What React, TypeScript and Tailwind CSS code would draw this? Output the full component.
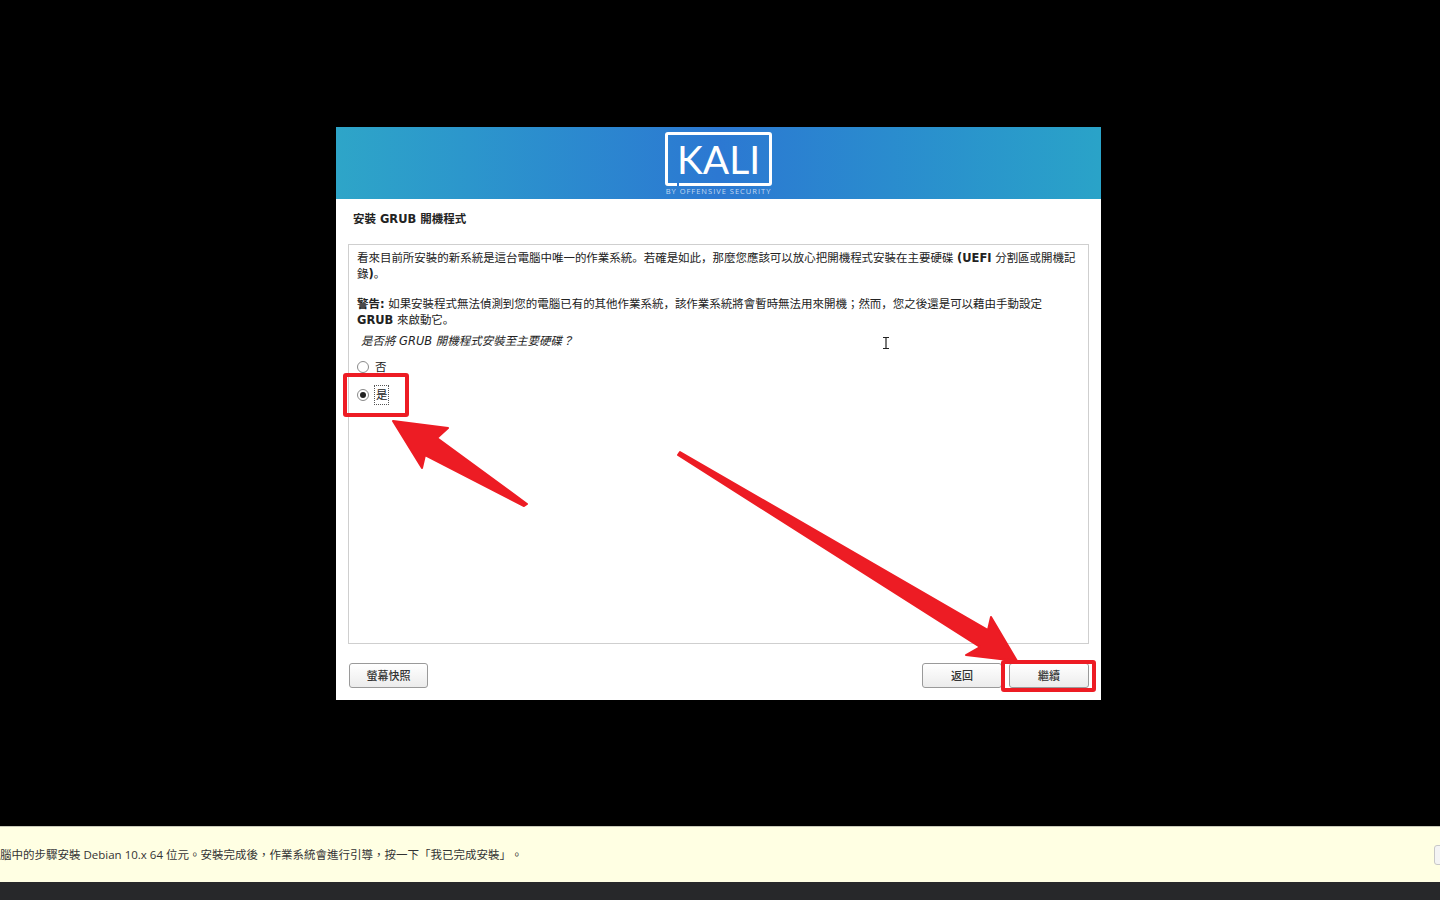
const font = "font-['DejaVu_Sans','Noto_Sans_CJK_JP',sans-serif]";

const Radio = ({ checked, label }: { checked?: boolean; label: string }) => (
  <div className="flex h-[16px] items-center gap-[5px]">
    <span className="flex h-[12px] w-[12px] items-center justify-center rounded-full border border-[#8a8a8a] bg-white">
      {checked && <span className="h-[6px] w-[6px] rounded-full bg-[#222]" />}
    </span>
    <span
      className={
        checked
          ? "border border-dotted border-[#555] px-px leading-[18px]"
          : "px-px"
      }
    >
      {label}
    </span>
  </div>
);

const Button = ({ label, className }: { label: string; className: string }) => (
  <button
    className={`h-[25px] rounded-[3px] border border-[#9a9a9a] bg-gradient-to-b from-white to-[#ececec] pt-[2px] text-[11px] font-medium text-[#333] ${className}`}
  >
    {label}
  </button>
);

const App = (): JSX.Element => {
  return (
    <div className={`relative flex h-screen flex-col overflow-hidden bg-black ${font}`}>
      <div className="ml-[336px] mt-[127px] flex h-[573px] w-[765px] flex-col bg-white text-[11.48px] leading-[16px] text-[#222]">
        <div className="flex h-[72px] flex-col items-center bg-gradient-to-r from-[#2ea5c8] via-[#2c78d2] to-[#2aa3c8] pt-[5px]">
          <div className="relative flex h-[54px] w-[107px] items-center justify-center rounded-[3px] border-[3px] border-white font-['Lato',sans-serif] text-[39px] leading-none text-white">
            KALI
            <span className="absolute -bottom-[3px] left-[9px] h-[3px] w-[2px] bg-[#2c78d2]" />
          </div>
          <div className="mt-[1px] whitespace-nowrap font-['Open_Sans',sans-serif] text-[7.5px] leading-[9px] tracking-[1px] text-[#c3d9f1]">
            BY OFFENSIVE SECURITY
          </div>
        </div>

        <h1 className="ml-[17px] mt-[12px] font-bold">安裝 GRUB 開機程式</h1>

        <div className="ml-[12px] mt-[17px] h-[400px] w-[741px] border border-[#cfcfcf] pl-[8px] pt-[5px]">
          <p className="whitespace-nowrap">
            看來目前所安裝的新系統是這台電腦中唯一的作業系統。若確是如此，那麼您應該可以放心把開機程式安裝在主要硬碟{" "}
            <b>(UEFI</b> 分割區或開機記
            <br />
            錄<b>)</b>。
          </p>
          <p className="mt-[14px] whitespace-nowrap">
            <b>警告:</b> 如果安裝程式無法偵測到您的電腦已有的其他作業系統，該作業系統將會暫時無法用來開機；然而，您之後還是可以藉由手動設定
            <br />
            <b>GRUB</b> 來啟動它。
          </p>
          <p className="ml-[4px] mt-[5px] italic">是否將 GRUB 開機程式安裝至主要硬碟？</p>
          <div className="mt-[10px] flex flex-col gap-[12px]">
            <Radio label="否" />
            <Radio checked label="是" />
          </div>
        </div>

        <div className="ml-[12px] mt-[19px] flex w-[741px] items-center">
          <Button label="螢幕快照" className="ml-px w-[79px]" />
          <Button label="返回" className="ml-auto w-[80px]" />
          <Button label="繼續" className="ml-[7px] w-[80px]" />
        </div>
      </div>

      <div className="mt-[126px] flex h-[56px] items-center justify-between overflow-hidden border-t border-[#c9c9b8] bg-[#ffffe3] font-['Open_Sans','Noto_Sans_CJK_TC',sans-serif]">
        <p className="whitespace-nowrap pt-[1px] text-[11.5px] text-[#333] [text-spacing-trim:space-all]">
          腦中的步驟安裝 Debian 10.x 64 位元。安裝完成後，作業系統會進行引導，按一下「我已完成安裝」。
        </p>
        <span className="-mr-[34px] h-[20px] w-[40px] shrink-0 rounded-[3px] border border-[#c8c8c8] bg-[#f4f4f4]" />
      </div>
      <div className="flex-1 bg-[#27282a]" />

      {/* annotations drawn over the screenshot */}
      <svg className="absolute left-0 top-0" width="1440" height="900" viewBox="0 0 1440 900" fill="none">
        <polygon fill="#ed1c24" stroke="#ed1c24" strokeWidth="2" strokeLinejoin="round" points="393,421 448,428 437,438 527,504 524,506 425,455 422,468" />
        <polygon fill="#ed1c24" stroke="#ed1c24" strokeWidth="2" strokeLinejoin="round" points="680,452 988,630 991,617 1017,661 966,655 980,647 678,455" />
        <rect x="345" y="375" width="62" height="40" rx="1" stroke="#ed1c24" strokeWidth="4" />
        <rect x="1003" y="662" width="91" height="28" rx="1" stroke="#ed1c24" strokeWidth="4" />
        <path d="M883 337.5h6M883 348.5h6M886 337.5v11" stroke="#222" strokeWidth="1.2" />
      </svg>
    </div>
  );
};

export default App;
